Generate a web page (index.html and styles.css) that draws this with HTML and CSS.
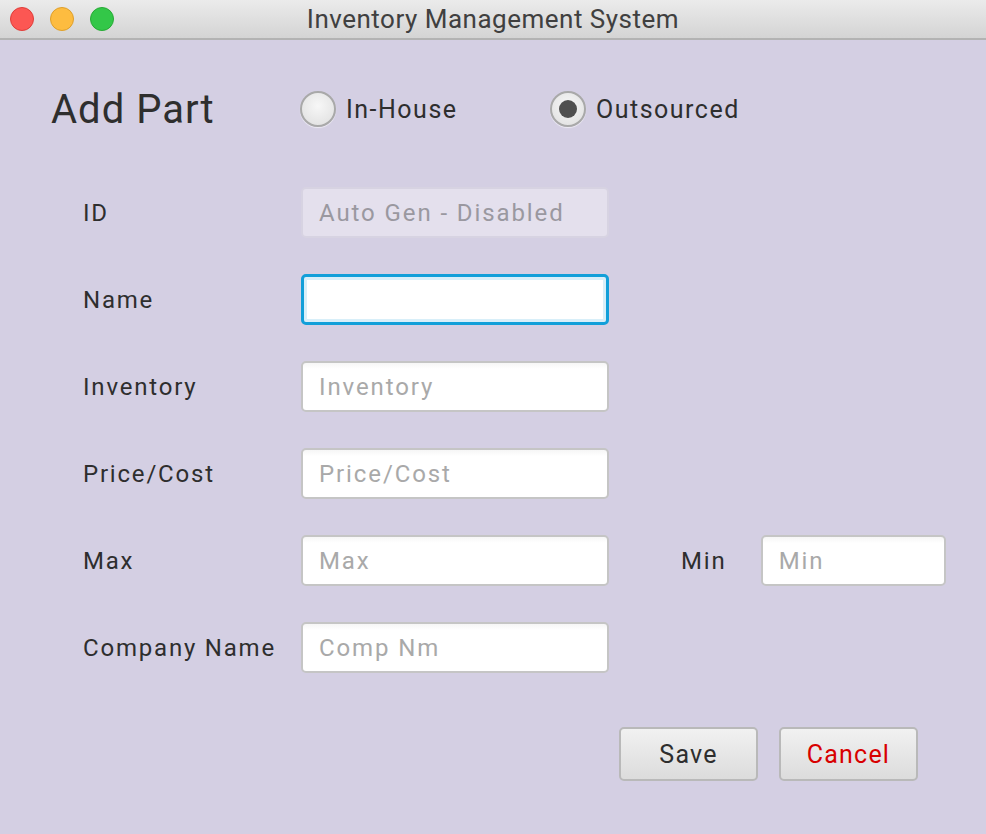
FILE: index.html
```html
<!DOCTYPE html>
<html>
<head>
<meta charset="utf-8">
<link rel="stylesheet" href="styles.css">
</head>
<body>
<div class="window">
  <div class="titlebar">
    <div class="lights">
      <span class="light red"></span>
      <span class="light yellow"></span>
      <span class="light green"></span>
    </div>
    <div class="title">Inventory Management System</div>
  </div>
  <div class="content">
    <div class="header">
      <h1 class="heading">Add Part</h1>
      <label class="radio radio-inhouse"><span class="radio-dot"></span><span>In-House</span></label>
      <label class="radio checked"><span class="radio-dot"></span><span>Outsourced</span></label>
    </div>
    <div class="form">
      <div class="label">ID</div>
      <div class="field disabled">Auto Gen - Disabled</div>
      <div class="spacer"></div>

      <div class="label">Name</div>
      <div class="field focused"></div>
      <div class="spacer"></div>

      <div class="label">Inventory</div>
      <div class="field placeholder">Inventory</div>
      <div class="spacer"></div>

      <div class="label">Price/Cost</div>
      <div class="field placeholder">Price/Cost</div>
      <div class="spacer"></div>

      <div class="label">Max</div>
      <div class="field placeholder">Max</div>
      <div class="minwrap">
        <div class="label min-label">Min</div>
        <div class="field placeholder min-field">Min</div>
      </div>

      <div class="label">Company Name</div>
      <div class="field placeholder">Comp Nm</div>
      <div class="spacer"></div>
    </div>
    <div class="buttons">
      <button class="btn">Save</button>
      <button class="btn cancel">Cancel</button>
    </div>
  </div>
</div>
</body>
</html>
```
FILE: styles.css
```css
html, body {
  margin: 0;
  padding: 0;
}
body {
  width: 986px;
  height: 834px;
  overflow: hidden;
  font-family: "Roboto", "Liberation Sans", sans-serif;
  background: #d4cfe3;
}
.window {
  width: 986px;
  height: 834px;
  display: flex;
  flex-direction: column;
}
.titlebar {
  height: 38px;
  border-bottom: 2px solid #b3b3b3;
  background: linear-gradient(#ebebeb, #d4d4d4);
  display: flex;
  align-items: center;
  position: relative;
}
.lights {
  display: flex;
  gap: 16px;
  padding-left: 10px;
}
.light {
  width: 24px;
  height: 24px;
  border-radius: 50%;
  box-sizing: border-box;
}
.red { background: #fc5753; border: 1px solid #df3d39; }
.yellow { background: #fdbc40; border: 1px solid #de9f2a; }
.green { background: #33c748; border: 1px solid #27aa35; }
.title {
  position: absolute;
  left: 0;
  right: 0;
  top: 0;
  bottom: 0;
  display: flex;
  align-items: center;
  justify-content: center;
  font-size: 26px;
  letter-spacing: 0.5px;
  color: #404040;
}
.content {
  flex: 1;
  padding: 0 0 0 51px;
}
.header {
  display: flex;
  align-items: center;
  height: 60px;
  margin-top: 39px;
}
.heading {
  margin: 0;
  font-weight: 400;
  font-size: 40px;
  letter-spacing: 1px;
  color: #2e2e2e;
  width: 249px;
}
.radio {
  display: flex;
  align-items: center;
  gap: 10px;
  font-size: 25px;
  letter-spacing: 1.5px;
  color: #2e2e2e;
}
.radio-inhouse {
  width: 250px;
}
.radio-dot {
  width: 36px;
  height: 36px;
  border-radius: 50%;
  box-sizing: border-box;
  border: 2px solid #a9a9a9;
  background: radial-gradient(circle at 50% 40%, #f7f7f7, #dedede);
  box-shadow: 0 1px 1px rgba(255,255,255,0.6);
  display: flex;
  align-items: center;
  justify-content: center;
}
.radio.checked .radio-dot::after {
  content: "";
  width: 18px;
  height: 18px;
  border-radius: 50%;
  background: #4f4f4f;
}
.form {
  margin-top: 48px;
  margin-left: 32px;
  display: grid;
  grid-template-columns: 218px 308px 337px;
  grid-auto-rows: 51px;
  row-gap: 36px;
  align-items: center;
}
.label {
  font-size: 24px;
  letter-spacing: 1.8px;
  color: #2e2e2e;
}
.field {
  height: 51px;
  box-sizing: border-box;
  border: 2px solid #c5c5c5;
  border-radius: 5px;
  background: linear-gradient(#f6f6f6 0, #ffffff 6px);
  font-size: 24px;
  letter-spacing: 1.9px;
  color: #a9a9a9;
  padding-left: 16px;
  display: flex;
  align-items: center;
}
.field.disabled {
  background: #e4e0ed;
  border-color: #d7d3e2;
  color: #9a98a0;
}
.field.focused {
  border: 3px solid #119fd9;
  background: #ffffff;
  box-shadow: inset 0 0 0 3px #d8eff9;
}
.minwrap {
  display: flex;
  align-items: center;
  padding-left: 72px;
}
.min-label {
  width: 80px;
}
.min-field {
  width: 186px;
}
.buttons {
  display: flex;
  justify-content: flex-end;
  gap: 21px;
  margin-top: 54px;
  padding-right: 68px;
}
.btn {
  width: 139px;
  height: 54px;
  box-sizing: border-box;
  border: 2px solid #b9b9b9;
  border-radius: 5px;
  background: linear-gradient(#f1f1f1, #dcdcdc);
  font-family: "Roboto", "Liberation Sans", sans-serif;
  font-size: 25px;
  letter-spacing: 1.2px;
  color: #2e2e2e;
}
.btn.cancel {
  color: #d80000;
}
```
